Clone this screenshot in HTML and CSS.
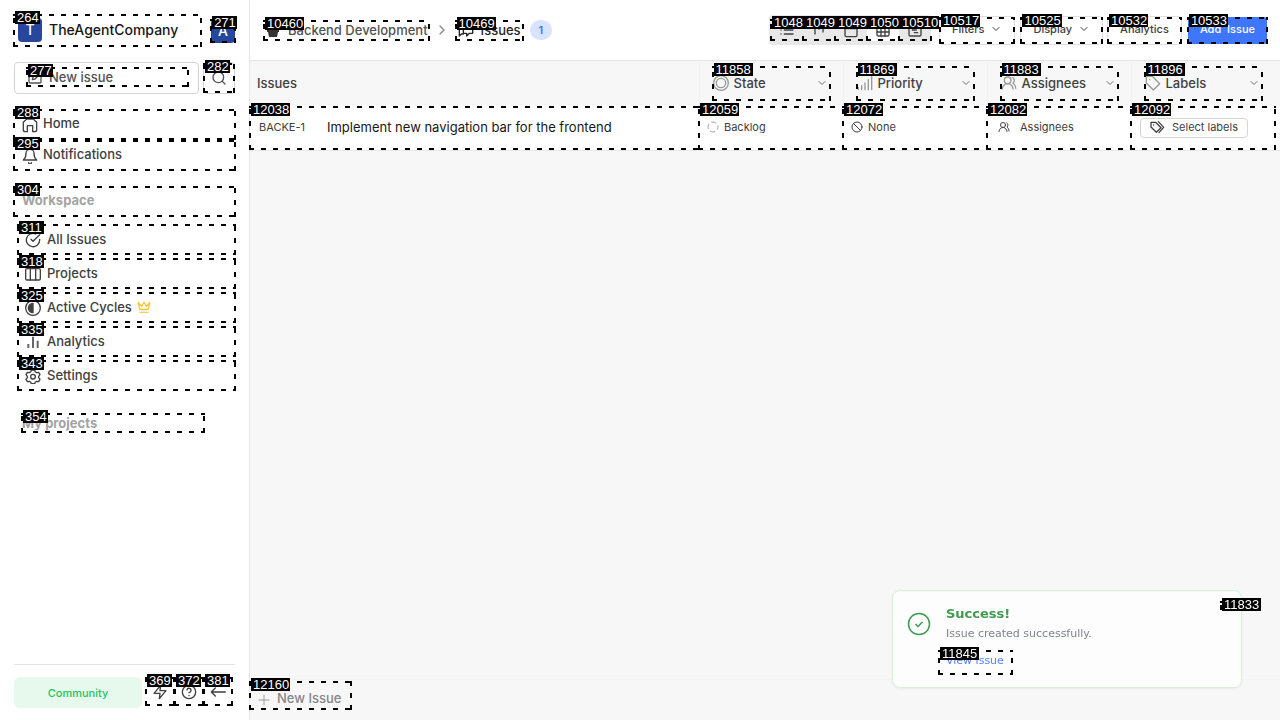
FILE: index.html
```html
<!DOCTYPE html>
<html lang="en">
<head>
<meta charset="utf-8">
<title>Backend Development - Issues</title>
<link rel="stylesheet" href="styles.css">
</head>
<body>
<svg class="sprite" aria-hidden="true">
  <symbol id="chevron" viewBox="0 0 24 24"><path d="m6 9 6 6 6-6"/></symbol>
  <symbol id="users" viewBox="0 0 24 24"><path d="M18 21a8 8 0 0 0-16 0"/><circle cx="10" cy="8" r="5"/><path d="M22 20c0-3.4-2-6.500-4-8a5 5 0 0 0-.45-8.300"/></symbol>
</svg>
<div class="app">
  <aside class="sidebar">
    <div class="side-top">
      <button class="workspace marked"><span class="logo">T</span><span>TheAgentCompany</span><span class="tag">264</span></button>
      <button class="avatar logo marked">A<span class="tag">271</span></button>
    </div>
    <div class="quick">
      <button class="new-issue"><span class="new-inner marked"><svg class="icon" viewBox="0 0 24 24"><path d="M12 3H5a2 2 0 0 0-2 2v14a2 2 0 0 0 2 2h14a2 2 0 0 0 2-2v-7M18.400 2.600a2.100 2.100 0 0 1 3 3L12 15l-4 1 1-4z"/></svg><span>New issue</span><span class="tag">277</span></span></button>
      <button class="search marked" aria-label="Search"><svg class="icon" viewBox="0 0 24 24"><circle cx="11" cy="11" r="8"/><path d="m21 21-4.300-4.300"/></svg><span class="tag">282</span></button>
    </div>
    <nav class="main-nav">
      <a class="nav-link marked" href="#"><svg class="icon" viewBox="0 0 24 24"><path d="M5 22a3 3 0 0 1-3-3V8l5-5h10l5 5v11a3 3 0 0 1-3 3M8 22v-9h8v9M5 22h3M16 22h3"/></svg>Home<span class="tag">288</span></a>
      <a class="nav-link marked" href="#"><svg class="icon" viewBox="0 0 24 24"><path d="M6 8a6 6 0 0 1 12 0c0 7 4 10 4 10H2s4-3 4-10M10 22a2 2 0 0 0 4 0"/></svg>Notifications<span class="tag">295</span></a>
    </nav>
    <button class="section marked">Workspace<span class="tag">304</span></button>
    <nav class="work-nav">
      <a class="nav-link marked" href="#"><svg class="icon" viewBox="0 0 24 24"><path d="M22 11v1a10 10 0 1 1-6-9.100M22 4 12 14l-3-3"/></svg>All Issues<span class="tag">311</span></a>
      <a class="nav-link marked" href="#"><svg class="icon" viewBox="0 0 24 24"><rect x="1" y="4" width="22" height="17" rx="2"/><path d="M8 4v17M16 4v17"/></svg>Projects<span class="tag">318</span></a>
      <a class="nav-link marked" href="#"><svg class="icon" viewBox="0 0 24 24"><circle cx="12" cy="12" r="11"/><path d="M12 5a7 7 0 0 0 0 14z" fill="currentColor"/></svg>Active Cycles<svg class="icon crown" viewBox="0 0 24 24"><path d="m2 4 3 12h14l3-12-6 7-4-7-4 7zM5 21h14"/></svg><span class="tag">325</span></a>
      <a class="nav-link marked" href="#"><svg class="icon bars" viewBox="0 0 24 24"><path d="M5 21v-6M12 21V4M19 21V10"/></svg>Analytics<span class="tag">335</span></a>
      <a class="nav-link marked" href="#"><svg class="icon" viewBox="0 0 24 24"><path d="m9.500 3-1 3-2 1-3-.500-2 3.500 2 2.500v2l-2 2.500 2 3.500 3-.500 2 1 1 2.500h5l1-2.500 2-1 3 .500 2-3.500-2-2.500v-2l2-2.500-2-3.500-3 .500-2-1-1-3z"/><circle cx="12" cy="13" r="3.500"/></svg>Settings<span class="tag">343</span></a>
    </nav>
    <button class="projects section marked">My projects<span class="tag">354</span></button>
    <footer class="side-foot">
      <button class="community">Community</button>
      <button class="foot-btn marked" aria-label="Shortcuts"><svg class="icon" viewBox="0 0 24 24"><path d="M13 2 3 14h9l-1 8 10-12h-9z"/></svg><span class="tag">369</span></button>
      <button class="foot-btn marked" aria-label="Help"><svg class="icon" viewBox="0 0 24 24"><circle cx="12" cy="12" r="10"/><path d="M9 9a3 3 0 0 1 6 1c0 2-3 3-3 3M12 17v.5"/></svg><span class="tag">372</span></button>
      <button class="foot-btn marked" aria-label="Collapse sidebar"><svg class="icon" viewBox="0 0 24 24"><path d="M23 12H2M8 6l-6 6 6 6"/></svg><span class="tag">381</span></button>
    </footer>
  </aside>

  <main class="main">
    <header class="topbar">
      <a class="crumb marked" href="#"><svg class="icon pot" viewBox="0 0 14 16"><path d="M2 1h10v6H2zM1 8h12v2H1zM2 10h10l-1 5H3z"/></svg>Backend Development<span class="tag wide">10460</span></a>
      <svg class="icon turn" viewBox="0 0 24 24"><use href="#chevron"/></svg>
      <a class="crumb current marked" href="#"><svg class="icon" viewBox="0 0 24 24"><path d="M8 18H5l-3 3V8h5M8 3h14v14h-5l-4 4v-4H8z"/></svg>Issues<span class="tag wide">10469</span></a>
      <span class="count">1</span>
      <div class="layouts">
        <button class="layout marked" aria-label="List"><svg class="icon" viewBox="0 0 24 24"><path d="M8 6h13M8 12h13M8 18h13M3 6h.1M3 12h.1M3 18h.1"/></svg><span class="tag wide">1048</span></button>
        <button class="layout marked" aria-label="Board"><svg class="icon" viewBox="0 0 24 24"><path d="M6 4v14M12 4v7M18 4v11"/></svg><span class="tag wide">1049</span></button>
        <button class="layout marked" aria-label="Calendar"><svg class="icon" viewBox="0 0 24 24"><rect x="3" y="4" width="18" height="18" rx="2"/><path d="M8 2v4M16 2v4M3 10h18"/></svg><span class="tag wide">1049</span></button>
        <button class="layout active marked" aria-label="Spreadsheet"><svg class="icon" viewBox="0 0 24 24"><rect x="3" y="3" width="18" height="18" rx="2"/><path d="M3 9h18M3 15h18M9 9v12M15 9v12"/></svg><span class="tag wide">1050</span></button>
        <button class="layout marked" aria-label="Timeline"><svg class="icon" viewBox="0 0 24 24"><rect x="3" y="3" width="18" height="18" rx="2"/><path d="M9 8h7M8 12h6M11 16h5"/></svg><span class="tag wide">10510</span></button>
      </div>
      <button class="tool marked">Filters<svg class="icon small" viewBox="0 0 24 24"><use href="#chevron"/></svg><span class="tag wide">10517</span></button>
      <button class="tool marked">Display<svg class="icon small" viewBox="0 0 24 24"><use href="#chevron"/></svg><span class="tag wide">10525</span></button>
      <button class="tool marked">Analytics<span class="tag wide">10532</span></button>
      <button class="add marked">Add&nbsp; Issue<span class="tag wide">10533</span></button>
    </header>

    <table class="sheet">
      <thead>
        <tr>
          <th class="title-col">Issues</th>
          <th><button class="col-head marked"><svg class="icon" viewBox="0 0 24 24"><circle cx="12" cy="12" r="11"/><circle cx="12" cy="12" r="7"/></svg><span>State</span><svg class="icon small" viewBox="0 0 24 24"><use href="#chevron"/></svg><span class="tag wide">11858</span></button></th>
          <th><button class="col-head marked"><svg class="icon" viewBox="0 0 24 24"><path d="M2 22v-3M7 22v-6M12 22V12M17 22V7M22 22V2"/></svg><span>Priority</span><svg class="icon small" viewBox="0 0 24 24"><use href="#chevron"/></svg><span class="tag wide">11869</span></button></th>
          <th><button class="col-head marked"><svg class="icon" viewBox="0 0 24 24"><use href="#users"/></svg><span>Assignees</span><svg class="icon small" viewBox="0 0 24 24"><use href="#chevron"/></svg><span class="tag wide">11883</span></button></th>
          <th><button class="col-head marked"><svg class="icon" viewBox="0 0 24 24"><path d="M2 3v9l10.500 10.500L22 13 11 2H3zM7 7h.1"/></svg><span>Labels</span><svg class="icon small" viewBox="0 0 24 24"><use href="#chevron"/></svg><span class="tag wide">11896</span></button></th>
        </tr>
      </thead>
      <tbody>
        <tr>
          <td class="marked"><a class="issue" href="#"><span class="key">BACKE-1</span><span>Implement new navigation bar for the frontend</span></a><span class="tag wide">12038</span></td>
          <td class="marked"><button class="cell"><svg class="icon small backlog" viewBox="0 0 24 24"><circle cx="12" cy="12" r="10"/></svg>Backlog</button><span class="tag wide">12059</span></td>
          <td class="marked"><button class="cell"><svg class="icon small" viewBox="0 0 24 24"><circle cx="12" cy="12" r="10"/><path d="m5 5 14 14"/></svg>None</button><span class="tag wide">12072</span></td>
          <td class="marked"><button class="cell assign"><svg class="icon small" viewBox="0 0 24 24"><use href="#users"/></svg>Assignees</button><span class="tag wide">12082</span></td>
          <td class="marked"><button class="cell labels"><svg class="icon" viewBox="0 0 24 24"><path d="M3 5v7l8 8 7-7-8-8zM7 9h.1M14 4l8 8.500-7 8"/></svg>Select labels</button><span class="tag wide">12092</span></td>
        </tr>
      </tbody>
    </table>

    <footer class="sheet-foot">
      <button class="add-row marked"><svg class="icon small" viewBox="0 0 24 24"><path d="M12 2v20M2 12h20"/></svg>New Issue<span class="tag wide">12160</span></button>
    </footer>
  </main>
</div>

<section class="toast" role="status">
  <svg class="toast-icon" viewBox="0 0 24 24"><circle cx="12" cy="12" r="10.500"/><path d="m8.500 12 2.500 2.500 4.500-4.500"/></svg>
  <div class="toast-body">
    <strong class="toast-title">Success!</strong>
    <p class="toast-text">Issue created successfully.</p>
    <a class="toast-link marked" href="#">View issue<span class="tag wide">11845</span></a>
  </div>
  <button class="toast-close marked" aria-label="Close"><span class="tag wide">11833</span></button>
</section>
</body>
</html>
```
FILE: styles.css
```css
* { box-sizing: border-box; }
body {
  margin: 0;
  font: 500 13px/20px Inter, "Liberation Sans", sans-serif;
  color: #404040;
  background: #f7f7f7;
}
button {
  font: inherit;
  color: inherit;
  background: none;
  border: 0;
  padding: 0;
  text-align: left;
}
a { color: inherit; text-decoration: none; }
.sprite { position: absolute; width: 0; height: 0; }
.icon {
  width: 16px;
  height: 16px;
  flex: none;
  fill: none;
  stroke: currentColor;
  stroke-width: 2;
  stroke-linecap: round;
  stroke-linejoin: round;
}
.small { width: 12px; height: 12px; }

/* numbered dashed frames over interactive elements */
.marked { position: relative; }
.marked::after {
  --dash: #000 0 5px, transparent 5px 12px;
  content: "";
  position: absolute;
  inset: 0 -1px;
  background:
    repeating-linear-gradient(to right, var(--dash)) top / 100% 2px no-repeat,
    repeating-linear-gradient(to right, var(--dash)) bottom / 100% 2px no-repeat,
    repeating-linear-gradient(to top, var(--dash)) left / 2px 100% no-repeat,
    repeating-linear-gradient(to top, var(--dash)) right / 2px 100% no-repeat;
  pointer-events: none;
}
.tag {
  position: absolute;
  z-index: 2;
  top: -3px;
  left: 1px;
  min-width: 25px;
  padding: 0 1px 0 2px;
  font: 400 13px/13px "Liberation Sans", Arial, sans-serif;
  color: #fff;
  background: #000;
  white-space: nowrap;
}
.wide { min-width: 39px; }

.app { display: flex; min-height: 100vh; }

.sidebar {
  width: 250px;
  flex: none;
  display: flex;
  flex-direction: column;
  padding: 14px 14px 12px;
  background: #fff;
  border-right: 1px solid #e5e5e5;
}
.side-top { display: flex; align-items: center; justify-content: space-between; }
.workspace {
  display: flex;
  align-items: center;
  gap: 7px;
  width: 187px;
  height: 33px;
  padding: 0 4px 1px;
  font-size: 14px;
  color: #171717;
}
.logo {
  width: 24px;
  height: 24px;
  border-radius: 4px;
  background: #26479c;
  color: #fff;
  font-size: 14px;
  line-height: 24px;
  text-align: center;
}
.quick { display: flex; gap: 4px; margin-top: 15px; }
.new-issue {
  flex: 1;
  height: 32px;
  padding: 0 10px 2px 12px;
  border: 1px solid #d4d4d4;
  border-radius: 4px;
  color: #525252;
}
.new-inner { display: flex; align-items: center; gap: 6px; }
.search {
  display: flex;
  align-items: center;
  justify-content: center;
  width: 32px;
  border: 1px solid #d4d4d4;
  border-radius: 4px;
  color: #525252;
}
.main-nav { margin-top: 15px; }
.nav-link {
  display: flex;
  align-items: center;
  gap: 5px;
  height: 31px;
  padding: 0 8px 3px;
}
.nav-link .icon { margin-top: 3px; }
.section {
  height: 31px;
  margin-top: 15px;
  padding: 0 8px 3px;
  font-weight: 700;
  color: #a3a3a3;
}
.work-nav {
  display: flex;
  flex-direction: column;
  gap: 3px;
  margin: 7px 0 0 4px;
}
.work-nav .nav-link { padding: 0 7px 2px; gap: 6px; }
.nav-link .crown { width: 14px; height: 14px; margin: 0 0 0 -1px; color: #fbbf24; }
.bars { stroke-width: 3; stroke-linecap: butt; color: #666; }
.projects {
  width: 182px;
  height: 20px;
  margin: 22px 0 0 8px;
  padding: 0;
  line-height: 16px;
}
.side-foot {
  display: flex;
  gap: 1px;
  margin-top: auto;
  padding: 12px 3px 0 0;
  border-top: 1px solid #e5e5e5;
}
.community {
  flex: 1;
  height: 31px;
  margin-right: 3px;
  border-radius: 6px;
  background: #e7f8ed;
  color: #22c55e;
  font-size: 11px;
  text-align: center;
}
.foot-btn {
  display: flex;
  align-items: center;
  justify-content: center;
  width: 28px;
  height: 29px;
}

.main { flex: 1; min-width: 0; display: flex; flex-direction: column; }
.topbar {
  display: flex;
  align-items: center;
  height: 61px;
  padding: 0 13px 0 14px;
  background: #fff;
  border-bottom: 1px solid #e5e5e5;
}
.crumb {
  display: flex;
  align-items: center;
  gap: 7px;
  height: 21px;
  padding: 0 1px 1px;
  color: #525252;
}
.current { color: #262626; padding: 0 2px 1px; }
.pot { fill: #333; stroke: none; }
.turn { margin: 0 6px 0 5px; transform: rotate(-90deg); color: #888; }
.count {
  margin-left: 7px;
  padding: 0 9px;
  border-radius: 10px;
  background: #d8e3ff;
  color: #3f76ff;
  font-size: 11px;
  font-weight: 600;
}
.layouts {
  display: flex;
  margin-left: auto;
  margin-right: 8px;
  padding: 4px 0 4px 2px;
  border-radius: 4px;
  background: #e8e8e8;
}
.layout {
  display: flex;
  align-items: center;
  justify-content: center;
  width: 32px;
  height: 22px;
  border-radius: 3px;
}
.active { background: #fff; }
.tool {
  display: flex;
  align-items: center;
  gap: 6px;
  height: 29px;
  margin-right: 5px;
  padding: 0 12px 2px;
  border: 1px solid #e0e0e0;
  border-radius: 4px;
  font-size: 11px;
}
.tool + .tool { margin-right: 4px; }
.add {
  height: 27px;
  margin-left: 2px;
  padding: 0 12px 2px;
  border-radius: 3px;
  background: #3f76ff;
  color: #fff;
  font-size: 11px;
}

.sheet { width: 100%; border-collapse: collapse; table-layout: fixed; }
.sheet th {
  width: 144px;
  height: 45px;
  padding: 0 13px;
  border-left: 1px solid #f1f1f1;
  font-weight: 500;
  text-align: left;
}
.sheet .title-col { width: auto; padding: 0 7px 2px; border: 0; }
.sheet th:last-child { width: 149px; padding-right: 18px; }
.col-head {
  display: flex;
  align-items: center;
  gap: 5px;
  width: 100%;
  height: 35px;
  padding-bottom: 2px;
}
.col-head .icon { color: #999; }
.col-head .small { margin-left: auto; margin-right: 2px; color: #737373; }
.sheet td {
  height: 44px;
  padding: 0 8px 2px;
  background: #fff;
  border-bottom: 1px solid #e5e5e5;
}
.sheet td:last-child { padding: 0 9px; }
.sheet td:last-child::after { right: 4px; }
.issue {
  display: flex;
  align-items: center;
  gap: 22px;
  padding-left: 1px;
  font-weight: 400;
  color: #171717;
}
.key { font-size: 11px; color: #404040; }
.cell {
  display: flex;
  align-items: center;
  gap: 5px;
  font-size: 11px;
  font-weight: 400;
}
.backlog { stroke: #a3a3a3; stroke-dasharray: 9 6.700; stroke-dashoffset: 4; }
.assign { gap: 10px; padding-left: 3px; }
.labels {
  gap: 7px;
  height: 20px;
  padding: 0 9px 1px 8px;
  border: 1px solid #d4d4d4;
  border-radius: 4px;
}
.sheet-foot {
  margin-top: auto;
  padding: 1px 0 10px;
  border-top: 1px solid #f3f3f3;
}
.add-row {
  display: flex;
  align-items: center;
  gap: 7px;
  height: 29px;
  padding: 5px 9px 0 8px;
  color: #858585;
}
.add-row .icon { margin-top: 3px; color: #999; }

.toast {
  position: fixed;
  right: 38px;
  bottom: 32px;
  display: flex;
  width: 350px;
  padding: 13px 6px 12px 14px;
  border: 1px solid #d7f1d9;
  border-radius: 8px;
  background: #fdfdfd;
  box-shadow: 0 1px 3px rgba(0, 0, 0, 0.05);
  font: 400 11px/20px "DejaVu Sans", sans-serif;
}
.toast-icon {
  width: 24px;
  height: 24px;
  margin: 8px 15px 0 0;
  fill: none;
  stroke: #3e9b4f;
  stroke-width: 1.500;
}
.toast-body { flex: 1; }
.toast-title { display: block; font-size: 13px; color: #3e9b4f; }
.toast-text { margin: 0; color: #80828d; }
.toast-link {
  display: block;
  width: 73px;
  height: 25px;
  margin: 6px 0 0 -7px;
  padding: 1px 7px;
  color: #5484ff;
}
.toast-close { width: 14px; height: 9px; margin-top: -3px; }
```
